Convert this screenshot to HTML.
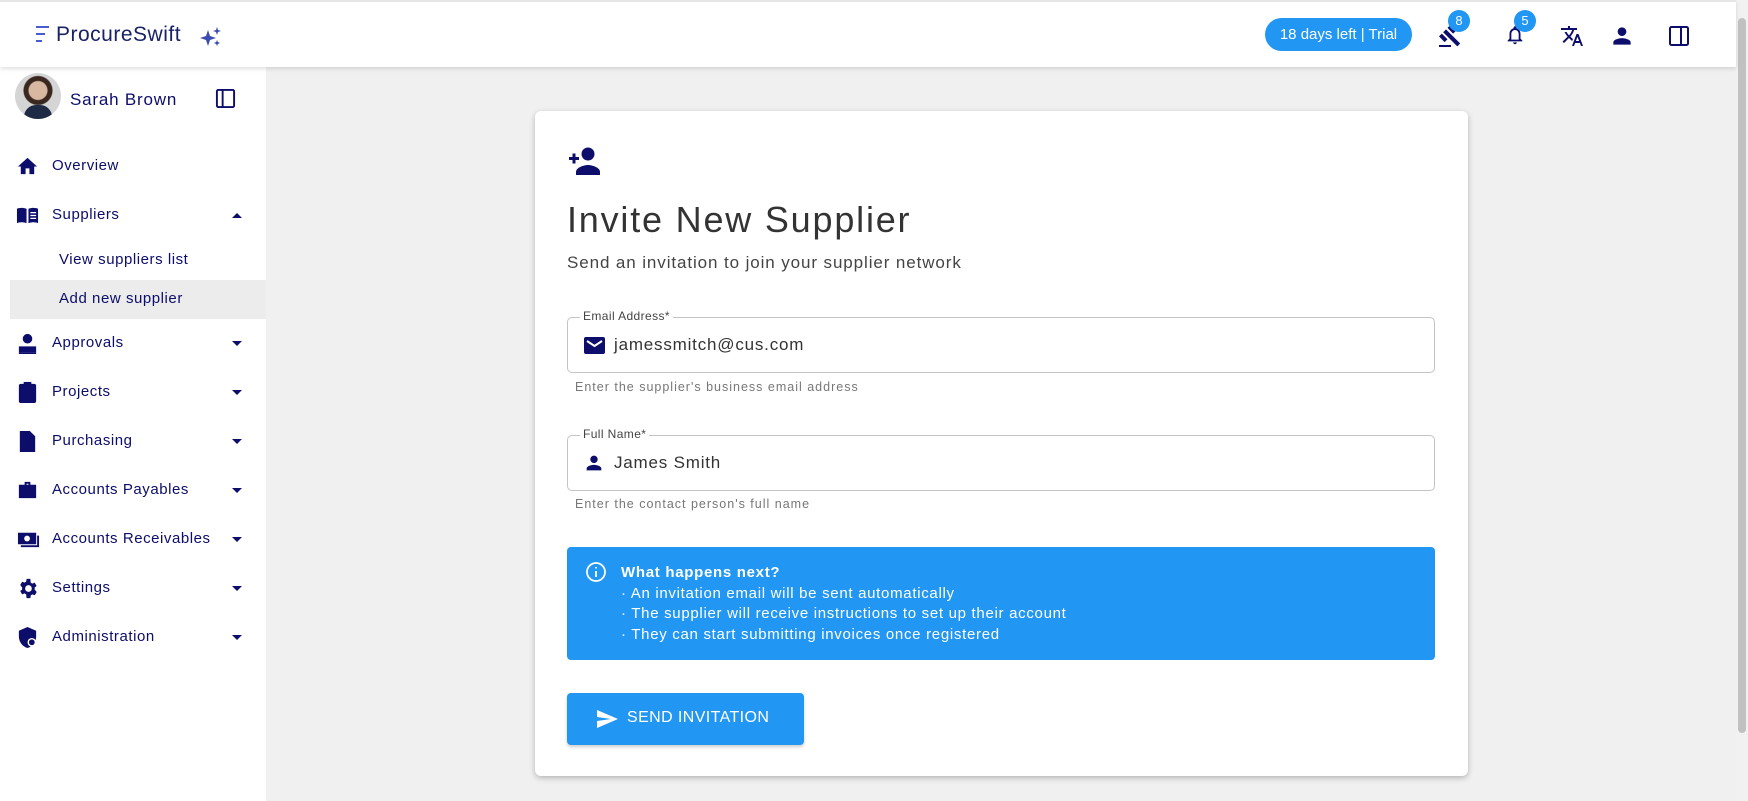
<!DOCTYPE html>
<html><head><meta charset="utf-8"><style>
*{box-sizing:border-box;margin:0;padding:0}
body{width:1748px;height:801px;overflow:hidden;background:#f0f0f0;font-family:"Liberation Sans",sans-serif;position:relative;color:#0d0d6b}
.a{position:absolute}
.hdr{left:0;top:0;width:1736px;height:67px;background:#fff;border-top:2px solid #e6e6e6;box-shadow:0 2px 4px rgba(0,0,0,.12);z-index:2}
.side{left:0;top:67px;width:266px;height:734px;background:#fff}
.nav{font-size:15px;color:#0d0d6b;letter-spacing:0.55px}
.navi{position:absolute;left:16px;width:23px;height:23px;fill:#0d0d6b}
.chev{position:absolute;left:232px;width:0;height:0;border-left:5px solid transparent;border-right:5px solid transparent;border-top:5px solid #0d0d6b}
.card{left:535px;top:111px;width:933px;height:665px;background:#fff;border-radius:6px;box-shadow:0 2px 6px rgba(0,0,0,.25)}
.field{position:absolute;left:32px;width:868px;height:56px;border:1px solid #c4c4c4;border-radius:5px}
.field .lbl{position:absolute;left:12px;top:-9px;background:#fff;padding:0 3px;font-size:12px;color:#444;letter-spacing:0.4px}
.field .val{position:absolute;left:46px;top:17px;font-size:17px;color:#333;letter-spacing:0.8px}
.help{position:absolute;left:40px;font-size:12.5px;color:#777;letter-spacing:1px}
.badge{position:absolute;width:22px;height:22px;border-radius:50%;background:#2196f3;color:#fff;font-size:13px;text-align:center;line-height:22px}
</style></head><body>
<div class="a hdr">
  <div class="a" style="left:36px;top:24px;width:14px">
    <div style="height:2px;width:13px;background:#4a5bd4;margin-bottom:5px"></div>
    <div style="height:2px;width:9px;background:#4a5bd4;margin-bottom:5px"></div>
    <div style="height:2px;width:6px;background:#4a5bd4"></div>
  </div>
  <div class="a" style="left:56px;top:21px;font-size:21px;color:#1a2266;letter-spacing:0.5px">ProcureSwift</div>
  <svg class="a" style="left:200px;top:25px" width="22" height="20" viewBox="0 0 22 20"><path d="M8 3 L10 9 L16 11 L10 13 L8 19 L6 13 L0 11 L6 9Z" fill="#3b4bb0"/><path d="M17 0 L18 3 L21 4 L18 5 L17 8 L16 5 L13 4 L16 3Z" fill="#3b4bb0"/><path d="M17 13 L17.8 15 L20 16 L17.8 17 L17 19 L16.2 17 L14 16 L16.2 15Z" fill="#3b4bb0"/></svg>
  <div class="a" style="left:1265px;top:16px;width:147px;height:33px;border-radius:17px;background:#2196f3;color:#fff;font-size:15px;text-align:center;line-height:33px">18 days left | Trial</div>
  <svg class="a" style="left:1437px;top:22px" width="26" height="24" viewBox="0 0 24 24" fill="#0d0d6b"><path d="M1 21h12v2H1zM5.2 8.2l2.8-2.8 14.2 14.1-2.9 2.9zM12.3 1.1l5.7 5.6-2.9 2.9-5.6-5.7zM3.8 9.6l5.7 5.6-2.9 2.9L1 12.4z"/></svg>
  <div class="badge" style="left:1448px;top:8px">8</div>
  <svg class="a" style="left:1504px;top:21px" width="22" height="24" viewBox="0 0 24 24" fill="#0d0d6b"><path d="M12 22c1.1 0 2-.9 2-2h-4c0 1.1.9 2 2 2zm6-6v-5c0-3.1-1.6-5.6-4.5-6.3V4c0-.8-.7-1.5-1.5-1.5s-1.5.7-1.5 1.5v.7C7.6 5.4 6 7.9 6 11v5l-2 2v1h16v-1l-2-2zm-2 1H8v-6c0-2.5 1.5-4.5 4-4.5s4 2 4 4.5v6z"/></svg>
  <div class="badge" style="left:1514px;top:8px">5</div>
  <svg class="a" style="left:1560px;top:22px" width="24" height="24" viewBox="0 0 24 24" fill="#0d0d6b"><path d="M12.9 15.1l-2.5-2.5v0c1.7-1.9 3-4.1 3.7-6.6H17V4h-7V2H8v2H1v2h11.2c-.7 1.9-1.7 3.8-3.2 5.4-1-1.1-1.8-2.3-2.4-3.4h-2c.7 1.6 1.700 3.2 3 4.6l-5.1 5L4 19l5-5 3.1 3.1.8-2zM18.5 10h-2L12 22h2l1.1-3h4.8l1.1 3h2l-4.5-12zm-2.6 7l1.6-4.3 1.6 4.3h-3.2z"/></svg>
  <svg class="a" style="left:1609px;top:21px" width="26" height="26" viewBox="0 0 24 24" fill="#0d0d6b"><path d="M12 12c2.2 0 4-1.8 4-4s-1.8-4-4-4-4 1.8-4 4 1.8 4 4 4zm0 2c-2.7 0-8 1.3-8 4v2h16v-2c0-2.7-5.3-4-8-4z"/></svg>
  <svg class="a" style="left:1668px;top:23px" width="22" height="22" viewBox="0 0 22 22" fill="none" stroke="#0d0d6b" stroke-width="2"><rect x="2" y="2" width="18" height="18" rx="1.5"/><line x1="13" y1="2" x2="13" y2="20"/></svg>
</div>
<div class="a" style="left:1736px;top:0;width:12px;height:801px;background:#f1f1f1"><div style="position:absolute;left:2px;top:18px;width:8px;height:715px;background:#c1c1c1;border-radius:4px"></div></div>
<div class="a side">
  <div class="a" style="left:15px;top:6px;width:46px;height:46px;border-radius:50%;background:radial-gradient(circle at 50% 38%,#d8b8a0 0 9px,#3a2820 10px 14px,#d5d5d5 15px);overflow:hidden"><div style="position:absolute;left:9px;top:32px;width:28px;height:16px;border-radius:12px 12px 0 0;background:#1f2a44"></div></div>
  <div class="a nav" style="left:70px;top:23px;font-size:17px;letter-spacing:0.8px">Sarah Brown</div>
  <svg class="a" style="left:215px;top:21px" width="21" height="21" viewBox="0 0 22 22" fill="none" stroke="#0d0d6b" stroke-width="2"><rect x="2" y="2" width="18" height="18" rx="1.5"/><line x1="8" y1="2" x2="8" y2="20"/></svg>
  <div class="a" style="left:10px;top:213px;width:256px;height:39px;background:#ececec"></div>
</div>
<div class="a" style="left:0;top:67px;width:266px;height:734px">
  <svg class="navi" style="top:88px" viewBox="0 0 24 24"><path d="M10 20v-6h4v6h5v-8h3L12 3 2 12h3v8z"/></svg>
  <div class="a nav" style="left:52px;top:90px">Overview</div>
  <svg class="navi" style="top:137px" viewBox="0 0 24 24"><path d="M1 5c2-1 6-1.5 10 0v15c-4-1.5-8-1-10 0zM13 5c4-1.5 8-1 10 0v15c-2-1-6-1.5-10 0z"/><path d="M15 9h6M15 12h6M15 15h6" stroke="#fff" stroke-width="1.3"/></svg>
  <div class="a nav" style="left:52px;top:139px">Suppliers</div>
  <div class="chev" style="top:146px;border-top:0;border-bottom:5px solid #0d0d6b"></div>
  <div class="a nav" style="left:59px;top:184px">View suppliers list</div>
  <div class="a nav" style="left:59px;top:223px">Add new supplier</div>
  <svg class="navi" style="top:265px" viewBox="0 0 24 24" fill="none" stroke="#0d0d6b" stroke-width="2"><circle cx="12" cy="7" r="4"/><path d="M4 16h16v4H4z"/><path d="M3 22h18"/></svg>
  <div class="a nav" style="left:52px;top:267px">Approvals</div><div class="chev" style="top:274px"></div>
  <svg class="navi" style="top:314px" viewBox="0 0 24 24" fill="none" stroke="#0d0d6b" stroke-width="2"><rect x="4" y="4" width="16" height="18" rx="1"/><rect x="9" y="2" width="6" height="4" fill="#0d0d6b"/></svg>
  <div class="a nav" style="left:52px;top:316px">Projects</div><div class="chev" style="top:323px"></div>
  <svg class="navi" style="top:363px" viewBox="0 0 24 24" fill="none" stroke="#0d0d6b" stroke-width="2"><path d="M5 2h9l5 5v15H5z"/><text x="9" y="18" font-size="10" fill="#0d0d6b" stroke="none" font-family="Liberation Sans">$</text></svg>
  <div class="a nav" style="left:52px;top:365px">Purchasing</div><div class="chev" style="top:372px"></div>
  <svg class="navi" style="top:412px" viewBox="0 0 24 24"><path d="M9 3h6v3h6v14H3V6h6zM11 5v1h2V5z"/></svg>
  <div class="a nav" style="left:52px;top:414px">Accounts Payables</div><div class="chev" style="top:421px"></div>
  <svg class="navi" style="top:461px;width:25px" viewBox="0 0 24 24"><path d="M1 5h19v12H1z"/><path d="M22 8v11H4" fill="none" stroke="#0d0d6b" stroke-width="2"/><circle cx="10.5" cy="11" r="3" fill="#fff"/></svg>
  <div class="a nav" style="left:52px;top:463px">Accounts Receivables</div><div class="chev" style="top:470px"></div>
  <svg class="navi" style="top:510px" viewBox="0 0 24 24"><path d="M19.4 13c0-.3.1-.6.1-1s0-.7-.1-1l2.1-1.6-2-3.5-2.5 1c-.5-.4-1.1-.7-1.7-1L15 2h-4l-.4 2.9c-.6.2-1.2.6-1.700 1l-2.5-1-2 3.5L6.5 11c0 .3-.1.6-.1 1s0 .7.1 1l-2.1 1.6 2 3.5 2.5-1c.5.4 1.1.7 1.7 1L11 22h4l.4-2.9c.6-.2 1.2-.6 1.7-1l2.5 1 2-3.5zM13 15.5a3.5 3.5 0 110-7 3.5 3.5 0 010 7z"/></svg>
  <div class="a nav" style="left:52px;top:512px">Settings</div><div class="chev" style="top:519px"></div>
  <svg class="navi" style="top:559px" viewBox="0 0 24 24"><path d="M12 1L3 5v6c0 5.5 3.8 10.7 9 12 5.2-1.3 9-6.5 9-12V5z"/><circle cx="16.5" cy="17" r="4.5" fill="#fff"/><circle cx="16.5" cy="17" r="3"/></svg>
  <div class="a nav" style="left:52px;top:561px">Administration</div><div class="chev" style="top:568px"></div>
</div>
<div class="a card">
  <svg class="a" style="left:32px;top:36px" width="36" height="28" viewBox="0 0 36 28" fill="#0d0d6b"><circle cx="21" cy="7" r="6.5"/><path d="M9 28v-3c0-4.5 8-7 12-7s12 2.5 12 7v3z"/><path d="M2 10h10v3H2zM5.5 6.5h3v10h-3z"/></svg>
  <div class="a" style="left:32px;top:88px;font-size:36px;color:#333;letter-spacing:1.8px">Invite New Supplier</div>
  <div class="a" style="left:32px;top:142px;font-size:17px;color:#444;letter-spacing:0.9px">Send an invitation to join your supplier network</div>
  <div class="field" style="top:206px"><span class="lbl">Email Address*</span>
    <svg class="a" style="left:16px;top:19px" width="21" height="17" viewBox="0 0 21 17"><rect width="21" height="17" rx="2" fill="#0d0d6b"/><path d="M3 4l7.5 5 7.5-5" fill="none" stroke="#fff" stroke-width="2"/></svg>
    <span class="val">jamessmitch@cus.com</span></div>
  <div class="help" style="top:269px">Enter the supplier's business email address</div>
  <div class="field" style="top:324px"><span class="lbl">Full Name*</span>
    <svg class="a" style="left:15px;top:16px" width="22" height="22" viewBox="0 0 24 24" fill="#0d0d6b"><path d="M12 12c2.2 0 4-1.8 4-4s-1.8-4-4-4-4 1.8-4 4 1.8 4 4 4zm0 2c-2.7 0-8 1.3-8 4v2h16v-2c0-2.7-5.3-4-8-4z"/></svg>
    <span class="val">James Smith</span></div>
  <div class="help" style="top:386px">Enter the contact person's full name</div>
  <div class="a" style="left:32px;top:436px;width:868px;height:113px;background:#2196f3;border-radius:4px;color:#fff">
    <svg class="a" style="left:18px;top:14px" width="22" height="22" viewBox="0 0 22 22" fill="none" stroke="#fff" stroke-width="1.8"><circle cx="11" cy="11" r="9"/><path d="M11 10v6M11 6v1.5"/></svg>
    <div class="a" style="left:54px;top:16px;font-size:15px;line-height:20.5px;letter-spacing:0.7px"><b>What happens next?</b><br>· An invitation email will be sent automatically<br>· The supplier will receive instructions to set up their account<br>· They can start submitting invoices once registered</div>
  </div>
  <div class="a" style="left:32px;top:582px;width:237px;height:52px;background:#2196f3;border-radius:4px;box-shadow:0 2px 3px rgba(0,0,0,.2);color:#fff">
    <svg class="a" style="left:30px;top:17px" width="21" height="18" viewBox="0 0 21 18" fill="#fff"><path d="M0 0l21 9-21 9 0-7 14-2-14-2z"/></svg>
    <div class="a" style="left:60px;top:16px;font-size:16px;letter-spacing:0.4px">SEND INVITATION</div>
  </div>
</div>
</body></html>
